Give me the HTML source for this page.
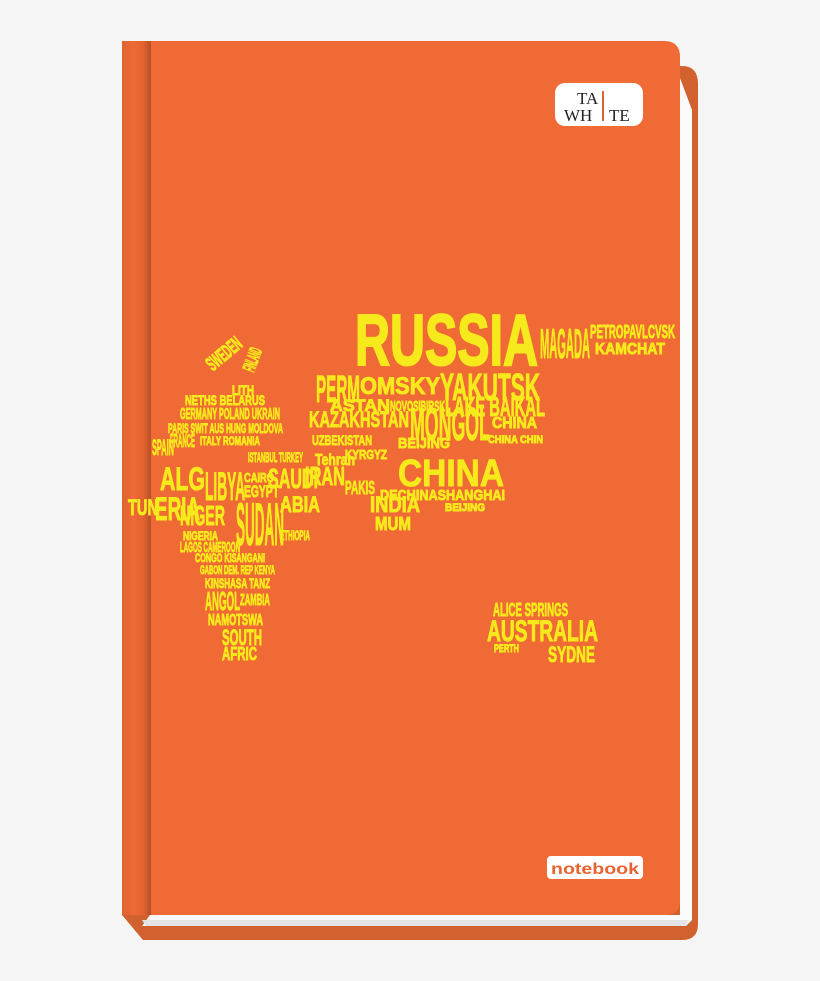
<!DOCTYPE html>
<html><head><meta charset="utf-8"><style>
html,body{margin:0;padding:0;background:#f5f5f5;}
svg{display:block}
</style></head><body>
<svg width="820" height="981" viewBox="0 0 820 981" xmlns="http://www.w3.org/2000/svg" font-family="Liberation Sans, sans-serif" font-weight="bold">
<defs>
<linearGradient id="sp" x1="0" x2="1">
<stop offset="0" stop-color="#dd6431"/><stop offset="0.4" stop-color="#ee6a35"/><stop offset="0.75" stop-color="#e2622f"/><stop offset="1" stop-color="#b54f28"/>
</linearGradient>
</defs>
<path d="M148 66 H682 Q698 66 698 84 V924 Q698 940 682 940 H143 L122 915 Z" fill="#d26130"/>
<path d="M680 78 L692 110 V920 L686 926 H142 L150 915 H680 Z" fill="#fafafa"/>
<path d="M142 920 H688 L686 926 H146 Z" fill="#e4e4e6"/>
<path d="M122 41 H664 Q680 41 680 57 V900 Q680 915 665 915 H122 Z" fill="#f06a35"/>
<rect x="122" y="41" width="29" height="874" fill="url(#sp)"/>
<rect x="555" y="83" width="88" height="43" rx="10" fill="#fff"/>
<text x="577" y="104" font-family="Liberation Serif, serif" font-weight="normal" font-size="17" fill="#222">TA</text>
<text x="564" y="121" font-family="Liberation Serif, serif" font-weight="normal" font-size="17" fill="#222">WH</text>
<text x="609" y="121" font-family="Liberation Serif, serif" font-weight="normal" font-size="17" fill="#222">TE</text>
<rect x="602" y="91" width="2" height="30" fill="#e0632f"/>
<rect x="547" y="856" width="96" height="23" rx="4" fill="#fff"/>
<text x="551" y="874" font-size="16" fill="#e8632f" textLength="88" lengthAdjust="spacingAndGlyphs">notebook</text>
<g fill="#f7ea1c" stroke="#f7ea1c" stroke-width="0.9">
<text x="355" y="365" font-size="72" textLength="183" lengthAdjust="spacingAndGlyphs" stroke-width="2">RUSSIA</text>
<text x="540" y="358" font-size="42" textLength="50" lengthAdjust="spacingAndGlyphs">MAGADA</text>
<text x="590" y="338" font-size="18" textLength="85" lengthAdjust="spacingAndGlyphs">PETROPAVLCVSK</text>
<text x="595" y="354" font-size="16" textLength="70" lengthAdjust="spacingAndGlyphs">KAMCHAT</text>
<text x="316" y="402" font-size="38" textLength="44" lengthAdjust="spacingAndGlyphs">PERM</text>
<text x="360" y="394" font-size="24" textLength="80" lengthAdjust="spacingAndGlyphs">OMSKY</text>
<text x="440" y="400" font-size="38" textLength="100" lengthAdjust="spacingAndGlyphs">YAKUTSK</text>
<text x="330" y="411" font-size="17" textLength="60" lengthAdjust="spacingAndGlyphs">ASTAN</text>
<text x="390" y="411" font-size="15" textLength="55" lengthAdjust="spacingAndGlyphs">NOVOSIBIRSK</text>
<text x="445" y="416" font-size="28" textLength="100" lengthAdjust="spacingAndGlyphs">LAKE BAIKAL</text>
<text x="309" y="427" font-size="22" textLength="100" lengthAdjust="spacingAndGlyphs">KAZAKHSTAN</text>
<text x="410" y="440" font-size="46" textLength="80" lengthAdjust="spacingAndGlyphs">MONGOL</text>
<text x="492" y="428" font-size="16" textLength="45" lengthAdjust="spacingAndGlyphs">CHINA</text>
<text x="312" y="445" font-size="14" textLength="60" lengthAdjust="spacingAndGlyphs">UZBEKISTAN</text>
<text x="345" y="459" font-size="13" textLength="42" lengthAdjust="spacingAndGlyphs">KYRGYZ</text>
<text x="398" y="448" font-size="15" textLength="52" lengthAdjust="spacingAndGlyphs">BEIJING</text>
<text x="488" y="443" font-size="11" textLength="55" lengthAdjust="spacingAndGlyphs">CHINA CHIN</text>
<text x="398" y="486" font-size="38" textLength="106" lengthAdjust="spacingAndGlyphs">CHINA</text>
<text x="380" y="500" font-size="15" textLength="125" lengthAdjust="spacingAndGlyphs">DECHINASHANGHAI</text>
<text x="445" y="511" font-size="11" textLength="40" lengthAdjust="spacingAndGlyphs">BEIJING</text>
<text x="370" y="512" font-size="22" textLength="50" lengthAdjust="spacingAndGlyphs">INDIA</text>
<text x="375" y="530" font-size="18" textLength="36" lengthAdjust="spacingAndGlyphs">MUM</text>
<text x="305" y="485" font-size="26" textLength="40" lengthAdjust="spacingAndGlyphs">IRAN</text>
<text x="315" y="465" font-size="16" textLength="40" lengthAdjust="spacingAndGlyphs">Tehran</text>
<text x="345" y="494" font-size="18" textLength="30" lengthAdjust="spacingAndGlyphs">PAKIS</text>
<text x="268" y="488" font-size="28" textLength="50" lengthAdjust="spacingAndGlyphs">SAUDI</text>
<text x="280" y="512" font-size="22" textLength="40" lengthAdjust="spacingAndGlyphs">ABIA</text>
<text x="248" y="462" font-size="14" textLength="55" lengthAdjust="spacingAndGlyphs">ISTANBUL TURKEY</text>
<text x="205" y="360" font-size="20" textLength="40" lengthAdjust="spacingAndGlyphs" transform="rotate(-40 225 355)">SWEDEN</text>
<text x="238" y="370" font-size="18" textLength="24" lengthAdjust="spacingAndGlyphs" transform="rotate(-70 248 360)">FINLAND</text>
<text x="232" y="395" font-size="14" textLength="22" lengthAdjust="spacingAndGlyphs">LITH</text>
<text x="185" y="405" font-size="14" textLength="80" lengthAdjust="spacingAndGlyphs">NETHS BELARUS</text>
<text x="180" y="419" font-size="16" textLength="100" lengthAdjust="spacingAndGlyphs">GERMANY POLAND UKRAIN</text>
<text x="168" y="433" font-size="14" textLength="115" lengthAdjust="spacingAndGlyphs">PARIS SWIT AUS HUNG MOLDOVA</text>
<text x="170" y="447" font-size="18" textLength="25" lengthAdjust="spacingAndGlyphs">FRANCE</text>
<text x="200" y="445" font-size="12" textLength="60" lengthAdjust="spacingAndGlyphs">ITALY ROMANIA</text>
<text x="152" y="455" font-size="22" textLength="22" lengthAdjust="spacingAndGlyphs">SPAIN</text>
<text x="160" y="490" font-size="32" textLength="45" lengthAdjust="spacingAndGlyphs">ALG</text>
<text x="205" y="500" font-size="40" textLength="40" lengthAdjust="spacingAndGlyphs">LIBYA</text>
<text x="244" y="482" font-size="13" textLength="30" lengthAdjust="spacingAndGlyphs">CAIRO</text>
<text x="244" y="497" font-size="17" textLength="35" lengthAdjust="spacingAndGlyphs">EGYPT</text>
<text x="155" y="520" font-size="32" textLength="45" lengthAdjust="spacingAndGlyphs">ERIA</text>
<text x="128" y="515" font-size="22" textLength="30" lengthAdjust="spacingAndGlyphs">TUN</text>
<text x="180" y="525" font-size="28" textLength="45" lengthAdjust="spacingAndGlyphs">NIGER</text>
<text x="236" y="545" font-size="60" textLength="48" lengthAdjust="spacingAndGlyphs">SUDAN</text>
<text x="183" y="540" font-size="12" textLength="35" lengthAdjust="spacingAndGlyphs">NIGERIA</text>
<text x="180" y="552" font-size="15" textLength="60" lengthAdjust="spacingAndGlyphs">LAGOS CAMEROON</text>
<text x="280" y="540" font-size="14" textLength="30" lengthAdjust="spacingAndGlyphs">ETHIOPIA</text>
<text x="195" y="562" font-size="12" textLength="70" lengthAdjust="spacingAndGlyphs">CONGO KISANGANI</text>
<text x="200" y="574" font-size="12" textLength="75" lengthAdjust="spacingAndGlyphs">GABON DEM. REP KENYA</text>
<text x="205" y="588" font-size="14" textLength="65" lengthAdjust="spacingAndGlyphs">KINSHASA TANZ</text>
<text x="205" y="610" font-size="26" textLength="35" lengthAdjust="spacingAndGlyphs">ANGOL</text>
<text x="240" y="605" font-size="16" textLength="30" lengthAdjust="spacingAndGlyphs">ZAMBIA</text>
<text x="208" y="625" font-size="16" textLength="55" lengthAdjust="spacingAndGlyphs">NAMOTSWA</text>
<text x="222" y="645" font-size="22" textLength="40" lengthAdjust="spacingAndGlyphs">SOUTH</text>
<text x="222" y="660" font-size="18" textLength="35" lengthAdjust="spacingAndGlyphs">AFRIC</text>
<text x="493" y="616" font-size="18" textLength="75" lengthAdjust="spacingAndGlyphs">ALICE SPRINGS</text>
<text x="487" y="641" font-size="30" textLength="111" lengthAdjust="spacingAndGlyphs">AUSTRALIA</text>
<text x="494" y="652" font-size="11" textLength="25" lengthAdjust="spacingAndGlyphs">PERTH</text>
<text x="548" y="662" font-size="22" textLength="47" lengthAdjust="spacingAndGlyphs">SYDNE</text>
</g>
</svg>
</body></html>
